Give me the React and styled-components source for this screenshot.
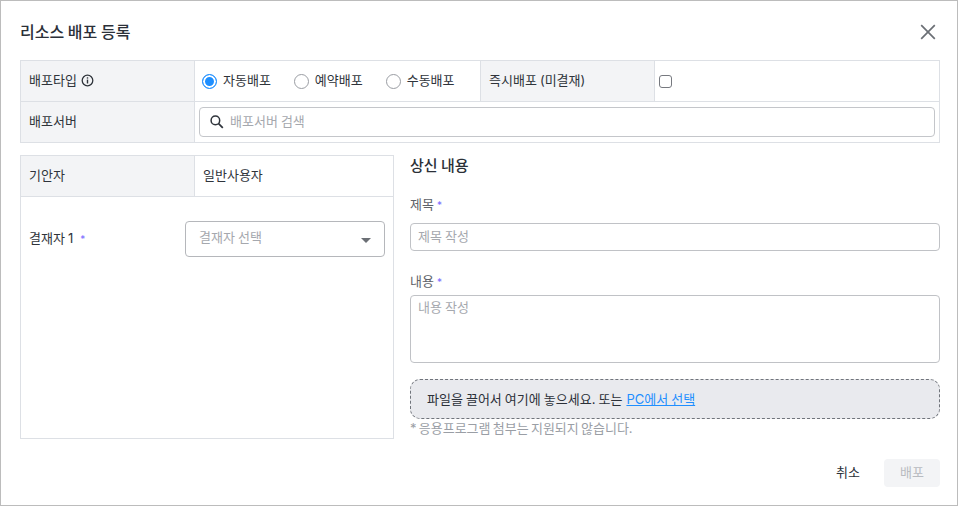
import React from "react";
import styled, { createGlobalStyle } from "styled-components";

const GlobalStyle = createGlobalStyle`
  html, body {
    margin: 0;
    padding: 0;
    background: #ffffff;
  }
  * {
    box-sizing: border-box;
  }
  body {
    font-family: Inter, "Noto Sans CJK KR", sans-serif;
    font-size: 13px;
    word-spacing: -0.6px;
    color: #2b3038;
  }
`;

const InfoIcon = () => (
  <svg width="13" height="13" viewBox="0 0 13 13" fill="none">
    <circle cx="6.5" cy="6.5" r="5.3" stroke="#2f343b" strokeWidth="1.3" />
    <rect x="5.8" y="5.6" width="1.4" height="3.9" fill="#2f343b" />
    <rect x="5.8" y="3.3" width="1.4" height="1.3" fill="#2f343b" />
  </svg>
);

const SearchIcon = () => (
  <svg width="16" height="16" viewBox="0 0 16 16" fill="none">
    <circle cx="6.4" cy="6.4" r="4.3" stroke="#2f343b" strokeWidth="1.5" />
    <path d="M9.6 9.6 L13.8 13.9" stroke="#2f343b" strokeWidth="1.7" />
  </svg>
);

const CloseIcon = () => (
  <svg width="16" height="16" viewBox="0 0 16 16" fill="none">
    <path d="M1.2 1.2 L14.8 14.8 M14.8 1.2 L1.2 14.8" stroke="#6b6f75" strokeWidth="1.7" />
  </svg>
);

const radios = [
  { label: "자동배포", checked: true },
  { label: "예약배포", checked: false },
  { label: "수동배포", checked: false },
];

export default function App() {
  return (
    <>
      <GlobalStyle />
      <Dialog>
        <Header>
          <Title>리소스 배포 등록</Title>
          <CloseButton>
            <CloseIcon />
          </CloseButton>
        </Header>

        <TopTable>
          <Row>
            <LabelCell>
              배포타입
              <InfoIcon />
            </LabelCell>
            <RadioCell>
              {radios.map((radio) => (
                <RadioItem key={radio.label}>
                  <RadioCircle $checked={radio.checked} />
                  <RadioText>{radio.label}</RadioText>
                </RadioItem>
              ))}
            </RadioCell>
            <LabelCell $raised>즉시배포 (미결재)</LabelCell>
            <CheckCell>
              <CheckBox />
            </CheckCell>
          </Row>
          <Row $last>
            <LabelCell $raised>배포서버</LabelCell>
            <SearchCell>
              <SearchBox>
                <SearchIcon />
                <Placeholder>배포서버 검색</Placeholder>
              </SearchBox>
            </SearchCell>
          </Row>
        </TopTable>

        <Columns>
          <ApprovalPanel>
            <Row>
              <LabelCell>기안자</LabelCell>
              <ValueCell>일반사용자</ValueCell>
            </Row>
            <ApproverRow>
              <ApproverLabel>
                결재자 1<Required $gap={7}>*</Required>
              </ApproverLabel>
              <SelectBox>
                <Placeholder>결재자 선택</Placeholder>
                <Caret />
              </SelectBox>
            </ApproverRow>
          </ApprovalPanel>

          <Form>
            <FormTitle>상신 내용</FormTitle>
            <FieldLabel>
              제목<Required>*</Required>
            </FieldLabel>
            <TitleInput>
              <Placeholder>제목 작성</Placeholder>
            </TitleInput>
            <FieldLabel $content>
              내용<Required>*</Required>
            </FieldLabel>
            <ContentInput>
              <Placeholder>내용 작성</Placeholder>
            </ContentInput>
            <DropZone>
              파일을 끌어서 여기에 놓으세요. 또는&nbsp;<FileLink>PC에서 선택</FileLink>
            </DropZone>
            <Notice>* 응용프로그램 첨부는 지원되지 않습니다.</Notice>
          </Form>
        </Columns>

        <Footer>
          <CancelButton>취소</CancelButton>
          <SubmitButton>배포</SubmitButton>
        </Footer>
      </Dialog>
    </>
  );
}

const Dialog = styled.div`
  width: 958px;
  height: 506px;
  border: 1px solid #bcbcbc;
  padding: 0 17px 0 19px;
  background: #ffffff;
  overflow: hidden;
`;

const Header = styled.div`
  height: 59px;
  display: flex;
  align-items: center;
  justify-content: space-between;
  padding-top: 3px;
`;

const Title = styled.h1`
  margin: 0;
  font-size: 16px;
  line-height: 24px;
  font-weight: 500;
  color: #2b3038;
`;

const CloseButton = styled.div`
  display: flex;
  margin-right: 4px;
`;

const TopTable = styled.div`
  width: 920px;
  border: 1px solid #dde0e5;
`;

const Row = styled.div`
  display: flex;
  height: ${({ $last }) => ($last ? "40px" : "41px")};
  border-bottom: ${({ $last }) => ($last ? "none" : "1px solid #dde0e5")};
`;

const LabelCell = styled.div`
  width: 174px;
  flex: none;
  display: flex;
  align-items: center;
  gap: 4px;
  padding: 0 8px;
  padding-bottom: ${({ $raised }) => ($raised ? "3px" : "2px")};
  background: #f3f4f6;
  border-right: 1px solid #dde0e5;
  color: #2f343b;
  line-height: 18px;
`;

const RadioCell = styled.div`
  width: 286px;
  flex: none;
  display: flex;
  align-items: center;
  padding-left: 7px;
  gap: 23px;
  border-right: 1px solid #dde0e5;
`;

const RadioItem = styled.div`
  display: flex;
  align-items: center;
  gap: 6px;
  color: #2f343b;
`;

const RadioText = styled.span`
  padding-bottom: 2px;
  line-height: 18px;
`;

const RadioCircle = styled.span`
  width: 15px;
  height: 15px;
  border-radius: 50%;
  flex: none;
  border: ${({ $checked }) => ($checked ? "1.5px solid #1f8fff" : "1.5px solid #9a9da3")};
  background: ${({ $checked }) => ($checked ? "#1f8fff" : "#ffffff")};
  box-shadow: ${({ $checked }) => ($checked ? "inset 0 0 0 2px #ffffff" : "none")};
`;

const CheckCell = styled.div`
  flex: 1;
  display: flex;
  align-items: center;
  padding-left: 4px;
`;

const CheckBox = styled.span`
  width: 13px;
  height: 13px;
  border: 1.3px solid #76797f;
  border-radius: 3px;
  background: #ffffff;
`;

const SearchCell = styled.div`
  flex: 1;
  padding: 5px 4px 5px 4px;
`;

const SearchBox = styled.div`
  height: 30px;
  border: 1px solid #c4c6ca;
  border-radius: 4px;
  display: flex;
  align-items: center;
  gap: 5px;
  padding: 0 0 0 9px;
`;

const Placeholder = styled.span`
  color: #a5a8ae;
  line-height: 18px;
  padding-bottom: 3px;
`;

const Columns = styled.div`
  display: flex;
  gap: 16px;
  margin-top: 12px;
`;

const ApprovalPanel = styled.div`
  width: 374px;
  height: 284px;
  border: 1px solid #dde0e5;
`;

const ValueCell = styled.div`
  flex: 1;
  display: flex;
  align-items: center;
  padding: 0 0 3px 8px;
  color: #2f343b;
`;

const ApproverRow = styled.div`
  display: flex;
  align-items: center;
  justify-content: space-between;
  margin-top: 24px;
  padding: 0 8px;
`;

const ApproverLabel = styled.div`
  color: #2f343b;
  padding-bottom: 4px;
`;

const Required = styled.span`
  color: #7a6cff;
  font-size: 10px;
  margin-left: ${({ $gap }) => $gap || 3}px;
`;

const SelectBox = styled.div`
  width: 200px;
  height: 36px;
  border: 1px solid #b5b7bb;
  border-radius: 4px;
  display: flex;
  align-items: center;
  justify-content: space-between;
  padding: 0 13px 2px;
`;

const Caret = styled.span`
  width: 0;
  height: 0;
  border-left: 5.5px solid transparent;
  border-right: 5.5px solid transparent;
  border-top: 5.5px solid #6b6f75;
  margin-top: 4px;
`;

const Form = styled.div`
  width: 530px;
  display: flex;
  flex-direction: column;
`;

const FormTitle = styled.h2`
  margin: 0;
  font-size: 15px;
  line-height: 22px;
  font-weight: 500;
  color: #2b3038;
`;

const FieldLabel = styled.div`
  color: #5d6269;
  line-height: 18px;
  margin-top: ${({ $content }) => ($content ? "21px" : "18px")};
  margin-bottom: ${({ $content }) => ($content ? "4px" : "9px")};
`;

const TitleInput = styled.div`
  height: 28px;
  border: 1px solid #c0c2c6;
  border-radius: 4px;
  padding: 3px 7px;
  display: flex;
  align-items: flex-start;
`;

const ContentInput = styled.div`
  height: 68px;
  border: 1px solid #c0c2c6;
  border-radius: 4px;
  padding: 2px 7px;
`;

const DropZone = styled.div`
  height: 40px;
  margin-top: 16px;
  padding: 0 16px 2px;
  display: flex;
  align-items: center;
  background: #e9eaee;
  border: 1px dashed #70747b;
  border-radius: 10px;
  color: #2b3038;
`;

const FileLink = styled.a`
  margin-left: 1px;
  color: #1f8fff;
  text-decoration: underline;
`;

const Notice = styled.div`
  margin-top: 0;
  color: #9a9ea5;
  line-height: 18px;
  word-spacing: -1.4px;
`;

const Footer = styled.div`
  width: 920px;
  display: flex;
  justify-content: flex-end;
  align-items: center;
  margin-top: 20px;
  gap: 24px;
`;

const CancelButton = styled.div`
  color: #2b3038;
  padding-bottom: 4px;
`;

const SubmitButton = styled.div`
  width: 56px;
  height: 28px;
  border-radius: 4px;
  background: #f3f4f6;
  color: #b8bbc0;
  display: flex;
  align-items: center;
  justify-content: center;
  padding-bottom: 4px;
`;
